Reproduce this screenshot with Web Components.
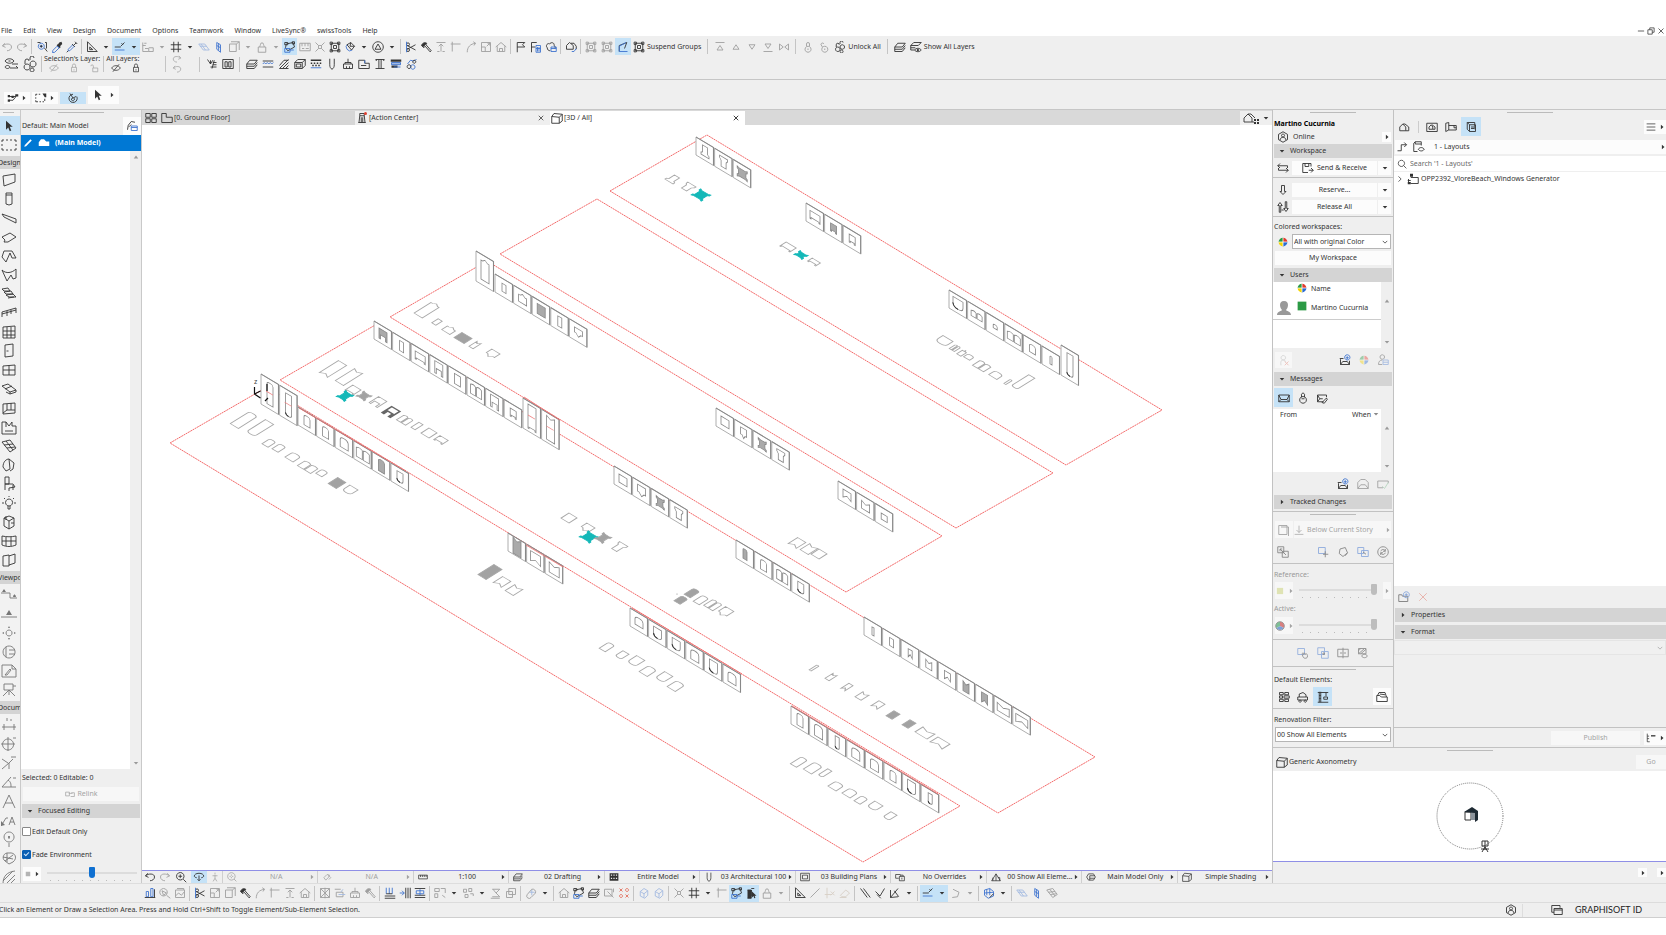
<!DOCTYPE html>
<html lang="en">
<head>
<meta charset="utf-8">
<title>3D / All</title>
<style>
html,body{margin:0;height:100%}
body{font:7px/10px "Noto Sans","Open Sans",sans-serif;color:#333;background:#fff}
</style>
</head>
<body>
<cad-app></cad-app>
<script>
/* Icons on a 16 unit grid. Parts are split by "|": a part that starts with "!" is filled, "b" is drawn in the accent colour. */
const ICONS={
undo:'M5 3 2 6.500l4 2M2 6.500C6 3 14 3 14 8c0 3-3 5-6 5',
redo:'M11 3l3 3.500-4 2M14 6.500C10 3 2 3 2 8c0 3 3 5 6 5',
find:'M11 9l4 5M2 2h4M12 2h2v8|bM7 3a4 4 0 1 0 .1 0M5 7h4M7 5v4|!M5.500 7a1.500 1.500 0 1 0 3 0 1.500 1.500 0 1 0-3 0',
pip:'!M9 5l2-3 3-1 1 3-3 3 1 1-1.500 1.500L7.500 5.500 9 4z|bM8 7l3 2-6 6-3 .500.500-3z',
syr:'M12 1l3 3M13.500 2.500l-3 3M8 4l4 4|bM9 5L3 11v2h2l6-6|M3 13l-2 2',
tri:'M2 1v13h13zM5 8v3.500h4z',
guide:'M9 7l5-5M10 3l2 2M1 8h8|bM1 12h13',
xy:'M1 2v12h8V10H4M1 6h4M9 9h6v5H9M3 3h3',
grid:'M5 1v14M11 1v14M1 5h14M1 11h14',
plane:'bM1 4h8l6 8H7zM4 4l6 8M2.500 7h9',
wall:'bM5 2l5 3v10l-5-4zM7.500 3.500v9M5 6l5 3',
sheet:'M4 1h11v11M2 4h9v10H2zM11 4l4-3',
bag:'M3 15V8h10v7zM5 8c0-2 1-2 1-3.500a2 2 0 1 1 4 0C10 6 11 6 11 8',
snap:'M3 4l9-2 2 6-9 5-3-4zM1 2h4v3H1zM11 1h3v3h-3z|bM1 10h7v5H1zM8 12h5',
rul:'M1 3h14v10H1zM4 3v4M8 3v4M12 3v4M4 10h3M9 10h4',
burst:'M2 2l4 4M14 2l-4 4M2 14l4-4M14 14l-4-4M6 6h4v4H6z',
grp:'M3 3h10v10H3zM1.500 1.500h3v3h-3zM11.500 1.500h3v3h-3zM1.500 11.500h3v3h-3zM11.500 11.500h3v3h-3zM6 6h4v4H6z',
roll:'bM5 4a4.500 4.500 0 1 0 6 8|M4 5l5-3 5 5-4 5zM9 2l-1 5 6 0',
delta:'M8 1a7 7 0 1 0 .1 0M8 4l4 7H4z',
cut:'M3 6l11 6M14 5L3 11M2 4.500a2 2 0 1 0 4 0 2 2 0 1 0-4 0M2 12a2 2 0 1 0 4 0 2 2 0 1 0-4 0|bM2 1v14',
hammer:'M2 6c1-3 4-5 7-3l-1 2 7 8-1.500 1.500L7 7 5 9z|!M2 6c1-3 4-5 7-3L5 8z',
up:'M2 2h12M8 14V4M5 7l3-3 3 3M3 14h3M10 14h3',
corner:'M3 14V4h11M1 4h2M3 1v3',
arc:'M3 15C3 8 7 4 14 3M11 1l3 2-2 3',
boxr:'M2 2h12v12H2zM2 8h5v6M9 7l4-4M10 3h3v3',
house:'M1 8l7-6 7 6M3 7v7h10V7M6 14v-4h4v4',
flag:'M3 15V2h10l-3 3 3 3H3',
flagb:'M2 15V2h7M2 8h5|bM8 6h6v9H8zM10 8v6M12 8v6M8 10h6',
cloud:'M3 9C0 6 4 2 6 4c2-3 7-2 6 2 2 1 2 3 1 4M3 9c0 3 2 4 4 4|bM8 8h7v6H8zM8 10h7',
houses:'M2 11V6l4-4 5 4v5zM8 3h4l3 4v4|bM9 14h3l3-4',
poly:'M3 14V6l10-4-3 8|bM3 14h11M3 14V7l9-5',
top:'M2 2h12M8 6l4 6H4z',
tup:'M8 5l4 6H4z',
tdn:'M8 11l4-6H4z',
bot:'M2 14h12M8 10l4-6H4z',
mir:'M2 4l5 4-5 4zM14 4l-5 4 5 4z',
lock:'M8 7a4 4 0 1 0 .1 0M6 7V4a2 2 0 0 1 4 0v3M8 10v2',
unl:'M9 7a4 4 0 1 0 .1 0M6 8L4 5a2 2 0 0 1 3-2l1 1M9 10v2',
unls:'M5 8a3 3 0 1 0 .1 0M3 8V5a2 2 0 0 1 4 0M11 5a3 3 0 1 0 .1 0M8 4V2a2 2 0 0 1 4 0M10 12a2 2 0 1 0 .1 0',
layers:'M1 8l4-5h10l-4 5zM1 11l10 0 4-5M1 14h10l4-5M1 8v6',
layeye:'M1 6l4-4h10l-4 4zM1 9h6M1 12h5M1 6v6M6 12c2-3 7-3 9 0-2 3-7 3-9 0|!M9 12a1.500 1.500 0 1 0 3 0 1.500 1.500 0 1 0-3 0',
eyeswap:'M1 5c2-3 7-3 9 0-2 3-7 3-9 0M4.500 5h2M6 12h8l-2-2M14 8H8M1 11c1-2 4-2 5 0-1 2-4 2-5 0',
eyeoff:'M1 8c3-5 11-5 14 0-3 5-11 5-14 0M3 14L13 2',
lk:'M4 7h8v7H4zM5.500 7V4a2.500 2.500 0 0 1 5 0v3M8 10v2',
ulk:'M6 8h8v6H6zM7 8V5a2 2 0 0 0-4 0',
wl:'M2 2l4 6V3M6 8l3-5M9 6h5M9 9h5M6 12h8M11 3l-3 11',
pan:'M1 2h14v12H1zM4 5h3v7H4zM9 5h3v7H9z',
wave:'M1 4h14M1 12h14|bM1 8l2-2 2 2 2-2 2 2 2-2 2 2 2-2',
hatch:'M2 14L14 2M6 14l8-8M10 14l4-4M2 14h12M2 10l6-7h6',
blocks:'M1 6l4-4h10v8l-4 4H1zM1 6h10l4-4M11 6v8M3 8h6v4H3z',
fill:'!M1 2h14v2H1zM1 6h2v2H1zM5 6h2v2H5zM9 6h2v2H9zM13 6h2v2h-2zM3 9h2v2H3zM7 9h2v2H7zM11 9h2v2h-2z|bM1 13h14',
pen:'M5 1v8c0 3 1 5 3 6 2-1 3-3 3-6V1',
brush:'M2 14V8h12v6zM4 8V6h8v2M8 6V1M6 11v3M10 11v3',
zone:'M1 3h8v4h6v7H1zM4 10h7|bM9 3v4',
ibeam:'M2 2h12M2 14h12M6.500 2v12M9.500 2v12M3 2v2M13 2v2',
bluef:'!M1 2h14v3H1zM2 10h8v3H2z|bM2 6h12v3H2zM2 8h12M5 12h9',
cir:'bM2 8l4-5 4 1M10 4l4-2M9 9a3 3 0 1 0 .1 0|M4 9a2.500 2.500 0 1 0 .1 0M11 3a2 2 0 1 0 .1 0',
cursor:'!M4 1v12l3-3 2 5 2-1-2-5h4z',
marq:'M1 3h2M5 3h2M9 3h2M13 3h2v2M15 7v2M15 11v2h-2M11 13H9M7 13H5M3 13H1v-2M1 9V7M1 5V3',
marqp:'M1 3h2M5 3h2M8 13H6M4 13H1v-2M1 9V7M1 5V3M12 13h-2M13 12V9|!M10 2h5v5h-2z',
selx:'M3 6h9l-4 5H2|!M1 4h3v3H1zM1 10h3v3H1zM6 5h3v3H6zM11 3h4v3h-4z',
rot:'M8 3a5.500 5.500 0 1 0 5 3M8 8L4 2M6 9l6-3M6 9a2 2 0 1 0 3-1',
tab4:'M1 2h6v5H1zM9 2h6v5H9zM1 9h6v5H1zM9 9h6v5H9z',
folder:'M1 14V2h6v5h8v7z',
tower:'M4 14l1-9h6l1 9M3 14h10M5 5V2h6v3M7 7v7M9 7v7',
cube:'M1 6l3-4 11 1v9l-4 3H1zM1 6l10 1M11 7l4-4M11 7v8',
hcam:'M1 12V8l4-4 4 4v4zM5 4h3l4 4|M9 12h2|!M11 9h2v2h-2zM14 9h2v2h-2zM11 12h2v2h-2zM14 12h2v2h-2z',
quad:'M2 4l12-2v8L3 14z',
col:'M5 2h6v11l-3 1-3-1zM5 4h6',
beam:'M1 4l14 5v4L3 7z',
slab:'M1 8l8-4 6 4-8 5H3l1-2z',
roof:'M3 3h8l4 7h-4l-2-5-4 9-4-5z',
shell:'M1 3c4 4 10 3 14-1v9l-3 1-2-4-4 6z',
stair:'M1 3l6-1 2 3H3zM3 6l7-1 2 3H5zM5 9l7-1 3 3H8zM7 12l6-1',
rail:'M1 7l14-4M1 7v5M15 3v5M6 6v5M10 5v4M1 9l14-4',
cw:'M2 3l12-1v12l-12 0zM2 7h12M2 11h12M6 3v11M10 3v11',
door:'M4 2l8-1v12l-8 1zM5.500 8h2',
win:'M2 4l12-1v10l-12 0zM2 8h12M8 3.500V13',
sky:'M1 5l6-2 8 6-6 2zM4 8l7-3M9 11v2l6-2V9M5 11l4 2',
opn:'M2 4l12-1v10l-12 1zM6 4v6l-4 3M6 10h8M10 3v7',
znt:'M1 3h4l3 4 3-4v4h4v8H1zM5 3v5M4 12h8',
mesh:'M1 4l8-2 6 8-6 4zM3 7l9-1M6 10l8-1M5 3l7 9',
obj:'M2 10C2 5 5 2 8 2l1 10-4 2zM8 2l5 4-1 6-3 2',
chair:'M4 1h4v7H4zM4 8v6M4 8h8l2 3-6 1M12 9v5M8 12v3',
lamp:'M8 4a3.500 3.500 0 1 0 .1 0M7 11v3h2v-3M1 8h2M13 8h2M8 1v1M3 3l1 1M13 3l-1 1',
ccube:'M3 4l5-2 5 2v8l-5 3-5-3zM3 4l5 3 5-3M8 7v8M5 2v4M10 9h3',
gridw:'M1 3c5 1 9 1 14 0v9c-5 2-9 2-14 0zM1 8h14M5 4v9M10 4v9',
mpan:'M2 4l6-1v11l-6 0zM8 4l6-2v9l-6 2',
sec:'M0 6h9v5h7M2 4h2M12 9h3|!M1 5l2-3 2 3zM12 10l1.500-3 1.500 3z',
elev:'M0 11h16|!M5 9l3-5 3 5z',
intel:'M8 5a3 3 0 1 0 .1 0|!M7 3l1-2 1 2zM7 13l1 2 1-2zM3 7L1 8l2 1zM13 7l2 1-2 1z',
det:'M8 2a6 6 0 1 0 .1 0M5 3v10M8 6h6M8 10h6',
wks:'M1 2h10l4 4v8H1zM4 12l5-6 1 1-4 5zM11 2v4h4',
cam:'M3 2h9v6H3zM12 4h3M8 8l-6 6M8 8l6 6M8 8v5',
dim:'M1 10h14M3 7v6M13 7v6M6 4V1M10 4V2',
lev:'M7 3a5.500 5.500 0 1 0 .1 0M0 8h14M7 1v14M12 2h3',
rad:'M8 8l-7 6M1 4l6 4M8 8v6M10 2h5M8 8l4-4',
ang:'M15 13H1L10 3M7 6c3 2 3 4 3 7M12 4h3',
A:'M2 15L8 2l6 13M4 10h8',
A1:'M0 14l5-8h2M8 13l3-8 3 8M9 10h4|!M0 14V9l4 4z',
pin:'M8 1a5 5 0 1 0 .1 0M8 5v3M8 12v4|!M7 6a1 1 0 1 0 2 0 1 1 0 1 0-2 0',
ball:'M4 11C0 8 3 2 8 3c6-1 9 5 4 9l-4 2zM4 11l8-6M2 7l10 2M6 3v9',
fil:'M2 15C2 7 6 3 14 2M5 15l9-9M2 12L12 2M9 15l5-5',
pencil:'!M2 14l1-3 9-9 2 2-9 9z',
houseF:'!M1 12V7l3-4h4l3 3h4v6H1z',
foldb:'M2 13l1-6 4-5 5 1M4 9l3-3|bM7 8h8v6H7zM7 10h8',
link:'M1 5h6v6H1zM6 7h6M10 6h5v6h-6',
zoom:'M7 2a5 5 0 1 0 .1 0M11 11l4 4M4.500 7h5M7 4.500v5',
zfit:'M7 1a6 6 0 1 0 .1 0M11 11l4 4M7 4v2M7 8v2M4 7h2M8 7h2',
orb:'M5 9C-1 8 2 3 8 3s9 3 5 3 6M8 6v7M6 11l2 2 2-2',
walk:'M8 1v3M4 6h8M8 5v5l-3 5M8 10l3 5',
hand:'M3 9l5-5 4 1-2 4-4 4zM10 5l4 4-3 3',
scale:'M1 5h14v6H1zM4 5v3M7 5v3M10 5v3M13 5v3',
dots:'!M1 2h14v12H1zM3 4v2h2V4zM7 4v2h2V4zM11 4v2h2V4zM3 9v2h2V9zM7 9v2h2V9zM11 9v2h2V9z',
frame:'M1 2h14v12H1zM4 5h8v6H4z',
ovr:'M1 4h8M1 4v6h5M7 7h8v7H7zM9 7V5h4v2M11 9v3',
reno:'M1 14h14L8 3zM8 3v11M3 14V9M11 9h3v5',
mdl:'M1 8l3-5h8l3 5-3 5H4zM6 6h8M6 10h8M6 6v7',
bars:'bM3 6h3v7H3zM9 2h3v11H9z|M1 14h14M14 3v11',
ztri:'M6 2a5 5 0 1 0 .1 0M10 11l5 4M4 5l6 3-4 3z',
img:'M2 4h12v10H2zM2 12l4-4 4 3 4-5M4 2h9v2',
xbox:'M2 2h12v12H2zM2 2l12 12M14 2L2 14M8 1v14',
rep:'M3 13V7h9v6zM1 3h8|bM6 10h9M12 3l-3 4',
comb:'bM3 1v8M7 1v8M11 1v8|M1 12h14M1 15h14M3 9h8',
comb2:'bM1 8h6M4 5l3 3-3 3|M9 1v14M12 1v14M15 1v14',
comb3:'M1 2h14M1 14h14M1 11h14|bM3 5h10v4H3zM8 3v8',
al:'M1 2h6v4H1zM1 9h4v5H1zM9 2h6v6M11 11l4 3',
ds:'M2 3h4v4H2zM9 2h4v4H9zM4 10h4v4H4zM11 9h4v3',
stk:'M3 3h10l-5 5 5 5H3M1 15h12M4 3l4 5',
cp:'M5 2h9v8H5zM2 6h8v8H2z',
plus:'M3 10L9 3a4 4 0 0 1 5 5l-6 6a3 3 0 0 1-5-4|bM9 4v7M6 7h7',
fx:'M2 3h10v9H2zM6 6l8 8M14 2v5',
rx:'rM2 2l4 4M6 2L2 6M10 10l4 4M14 10l-4 4M12 2a2 2 0 1 0 .1 0M4 10a2 2 0 1 0 .1 0',
b3:'bM3 6l5-4 5 3v6l-4 4-6-3zM3 6l5 3 5-4M8 9v5',
cur2:'M2 4h5v11H2M7 2h4M7 4v8|!M2 4h5v11H2zM8 6v8l2-2 1 3 1.500-.500-1-3H14z',
ln:'M2 14L14 2',
axx:'oM4 1v14M1 10h10M9 6l5 5M14 6l-5 5',
ers:'oM2 11l7-7 5 4-5 5H4zM1 14h9',
par:'M2 2l9 12M6 2l9 12',
perp:'M2 6l6 6M8 12l6-10M4 10l5 5',
angl:'M2 14L12 2M2 14l10-1M2 14V4M7 5l6 8',
br:'M4 3l8 4-2 6-7 1',
cubes:'bM2 4l7-2 5 4v6l-7 3-5-4zM5 3v8M9 2v9M2 8l12-1|M9 14l5-5',
pers:'M8 1l6 3.500v7L8 15l-6-3.500v-7zM8 4a2 2 0 1 0 .1 0M4 12c1-5 7-5 8 0',
wins:'M1 2h11v3M1 2v9h3M4 6h11v8H4zM4 8h11',
swap:'M4 2L1 5l3 3M1 5h13v3M12 8l3 3-3 3M15 11H2V8',
disk:'M1 2h11v4M1 2v12h7M4 2v4h5V2M9 11h6M12 8l3 3-3 3',
dn:'M6 2h4v8h2l-4 4-4-4h2z',
upd:'M3 15V6H1l3-4 3 4H5v9zM11 1h2v9h2l-3 4-3-4h2zM6 12h3',
usrx:'M7 2a3 3 0 1 0 .1 0M4 15c-1-6 1-7 3-7s3 1 3 3|rM9 10l5 5M14 10l-5 5',
usrb:'M7 1a3 3 0 1 0 .1 0M2 14c0-4 2-6 5-6M2 14h5|bM8 8h7v6H8zM8 11h7',
mailb:'M2 7v7h12V9M2 14l3-4h6l3 4M1 6h5|bM11 1a3.500 3.500 0 1 0 .1 0M11 3v4M9 5h4',
mail:'M1 4h14v9H1zM1 4l3 6h8l3-6M4 10l-3 3M12 10l3 3',
bell:'M8 6a4.500 4.500 0 1 0 .1 0M6 7V3l2-2 2 2v4M6 9h4',
mailp:'M10 13H2V4h12v3M2 4l3 5h4M2 13l3-4M8 14l6-6 1 2-4 5z',
mailo:'M1 14V6l4-4h6l4 4v8zM1 14l4-5h6l4 5',
mailg:'M8 13H1V4h14v3|gM7 11l3 3 5-8',
story:'M1 2h11v12H1zM4 4h10v12',
down:'M8 1v11M4 8l4 4 4-4M1 15h14',
trk:'M1 1h8v8H1zM7 7h8v8H7zM4 4l8 8M4 4v3M4 4h3',
sqp:'bM2 2h9v8H2z|M11 7v8M8 11h7',
sqr:'M4 4l7-2 3 7-6 5-5-4zM11 13l3-4',
sqs:'bM1 2h8v8H1zM6 6h9v8H6z|M8 8l4 3',
ref:'M8 1a7 7 0 1 0 .1 0M5 7c1-3 5-3 6 0M11 9c-1 3-5 3-6 0M11 4v3H8M5 12V9h3',
sqh:'bM1 2h9v8H1z|M7 10c0-3 2-3 2 0 1-3 2-2 2 0 2-2 3 0 3 2s-1 3-3 3-3-1-4-5',
sqo:'bM1 1h9v9H1zM6 6h9v9H6z|M8 8h2v2H8z',
sqm:'M1 3h14v10H1zM8 1v14M4 8h3M9 8h3',
sqx:'M2 2h10v7H2zM2 9l8-7M2 5l3-3M5 9l7-6M6 12c2-3 6-3 8 0-2 3-6 3-8 0',
brick:'M2 2h5v3H2zM9 2h5v3H9zM2 6.500h4v3H2zM8 6.500h7v3H8zM2 11h5v3H2zM9 11h5v3H9z',
doz:'M1 8h13v4H1zM3 8V4l5-2 4 3v3M4 12a1.500 1.500 0 1 0 .1 0M11 12a1.500 1.500 0 1 0 .1 0',
crane:'M3 1v14M5 1v14M1 2h14M12 2v5M3 6h2M3 10h2M1 15h14M9 8h5v3H9z',
fold2:'M1 14V6h4l2 2h8v6zM2 6l2-4 8 0 2 6M5 4l7 1',
hs:'M1 13V8l4-4 4 4v5zM5 4h3l5 4v5H9',
hsf:'M1 3h14v11H1zM4 11V8l3-3 2 3v3zM8 5l4 3v3H9',
bk:'M1 14V3l4-1v10l-4 2M5 6h10v6H5M12 6v3h3',
book:'M3 2h10v9M3 2v9l3 3h8V5H6M3 2l3 3v9M8 8h4M8 10h4',
menu:'M1 3h14M1 8h14M1 13h14',
back:'M2 13h5V5h7M11 2l3 3-3 3',
lay:'M3 1h8v5M3 1L1 3v11h5M3 1v3h8M7 11c2-3 6-3 8 0-2 3-6 3-8 0',
mag:'M7 2a5 5 0 1 0 .1 0M11 11l4 4',
chev:'M4 1l7 7-7 7',
chd:'M2 5l6 6 6-6',
proj:'M5 6h10v8H5M2 14V8M1 10h4|!M4 1h4v4H4zM1 12h4v3H1z',
newf:'M1 14V5h4l1 2h7v7z|bM11 1a4 4 0 1 0 .1 0M11 3v4M9 5h4',
x:'M2 2l12 12M14 2L2 14',
xr:'rM2 2l12 12M14 2L2 14',
tree:'M2 1v13h4M2 5h3M2 9h3M8 5h7|M8 4h7',
rt:'!M5 2l7 6-7 6z',
dd:'!M2 5h12l-6 7z',
uu:'!M2 12h12L8 4z',
min:'M3 8h10',
res:'M3 6h7v7H3zM6 6V3h7v7h-3',
cls:'M4 4l8 8M12 4l-8 8',
};
ICONS.orb='M5 9C-1 8 2 3 8 3s9 5 3 6M8 6v7M6 11l2 2 2-2';
const EXTRA={
pie:'<path fill="#e23b2e" d="M8 8V1a7 7 0 0 1 7 7z"/><path fill="#2a6bd0" d="M8 8h7a7 7 0 0 1-7 7z"/><path fill="#f4d300" d="M8 8v7a7 7 0 0 1-7-7z"/><path fill="#2b9a45" d="M8 8H1a7 7 0 0 1 7-7z"/><path stroke="#fff" d="M8 1v14M1 8h14"/>',
person:'<path fill="#999" d="M8 1c3 0 4 2 4 4s-1 4-2 5c0 1 5 1 5 5H1c0-4 5-4 5-5-1-1-2-3-2-5s1-4 4-4z"/>',
green:'<path fill="#2b9a45" d="M1 1h14v14H1z"/>',
sqy:'<path fill="#dfe3b4" d="M3 3h10v10H3z"/>',
sqg:'<path fill="#b4b4b4" d="M2 2h12v12H2z"/>',
rgb:'<path fill="#d98080" d="M8 8V1a7 7 0 0 1 6 10z"/><path fill="#7ea2d8" d="M8 8l6 3a7 7 0 0 1-12 0z"/><path fill="#7fbf95" d="M8 8l-6 3A7 7 0 0 1 8 1z"/><circle cx="8" cy="8" r="7" stroke="#888"/>',
};
const ico=n=>EXTRA[n]||(ICONS[n]||'').split('|').map(p=>{
  const k=p[0],c={b:'var(--accent,#3f74cf)',r:'#e2705f',g:'#68b37e',o:'#b9a58f'}[k];
  return k==='!'?`<path fill="currentColor" d="${p.slice(1)}"/>`:`<path stroke="${c||'currentColor'}" d="${c?p.slice(1):p}"/>`}).join('');

const define=(name,css,html)=>customElements.define(name,class extends HTMLElement{
  connectedCallback(){
    if(this.shadowRoot)return;
    const r=this.attachShadow({mode:'open'}),t=document.createElement('template');
    t.innerHTML=`<style>*{box-sizing:border-box}${css}</style>${typeof html==='function'?html(this):html}`;
    r.append(t.content.cloneNode(true));
  }});

define('ui-icon',':host{display:inline-flex;flex:none;width:12px;height:12px}:host([s]){width:10px;height:10px}:host([xs]){width:6px;height:6px}:host([l]){width:16px;height:16px}:host([dim]){opacity:.4}svg{width:100%;height:100%;fill:none;stroke-width:1.2}:host([l]) svg{stroke-width:.9}:host([xs]) svg{stroke-width:2}',
  e=>`<svg viewBox="0 0 16 16" aria-hidden="true">${ico(e.getAttribute('n'))}</svg>`);

/* A row of tools. name, name- (disabled), name* (active), v (menu arrow), "|" (rule), =Label */
define('tool-row',':host{display:flex;align-items:center;height:17px;--w:15px}button{all:unset;box-sizing:border-box;flex:none;width:var(--w);height:17px;display:flex;align-items:center;justify-content:center}.d{width:13px}.on{background:#c5e2f7}.off{opacity:.42}i{flex:none;width:1px;height:15px;background:#c4c4c4;margin:0 2px}.t{width:auto;white-space:nowrap;padding-right:3px}.wide{--w:16px;display:flex;align-items:center}.wide i{margin:0 4px 0 3px}',
  e=>{const one=t=>{
    if(t==='|')return'<i></i>';
    if(t[0]==='=')return`<button class="t">${t.slice(1).replace(/_/g,' ')}</button>`;
    const f=t.slice(-1),n=t.replace(/[-*]$/,''),c=(n==='v'?'d ':'')+(f==='*'?'on':f==='-'?'off':'');
    return`<button class="${c}" aria-label="${n==='v'?'more':n}"><ui-icon ${n==='v'?'xs n="dd"':`n="${n}"`}></ui-icon></button>`};
    const [a,b]=e.getAttribute('tools').split('//');
    const m=s=>s.split(/\s+/).filter(Boolean).map(one).join('');
    return m(a)+(b?`<span class="wide">${m(b)}</span>`:'')});

define('menu-bar',':host{display:flex;height:36px;align-items:flex-end;justify-content:space-between;background:#fff;padding:0 0 0 1px}nav{display:flex;gap:11px}a{color:inherit;text-decoration:none;line-height:11px}div{display:flex}',
  `<nav>${['File','Edit','View','Design','Document','Options','Teamwork','Window','LiveSync®','swissTools','Help'].map(t=>`<a href="#">${t}</a>`).join('')}</nav><div><ui-icon s n="min"></ui-icon><ui-icon s n="res"></ui-icon><ui-icon s n="cls"></ui-icon></div>`);

define('layer-row',':host{display:flex;height:24px;align-items:center;padding:0 0 7px 4px}i{width:1px;align-self:stretch;background:#c4c4c4;margin:1px 2px 0 3px}.g{display:flex;flex-direction:column;white-space:nowrap;line-height:9px}.g span{display:flex;gap:10px;padding-left:5px}.u{display:flex;flex-direction:column;margin:0 14px 0 4px}tool-row{--w:16px;margin-bottom:-1px}',
  `<ui-icon n="eyeswap" l></ui-icon><ui-icon n="unls" l style="margin-left:2px"></ui-icon><i></i>
  <div class="g"><span style="padding:0">Selection's Layer:</span><span><ui-icon s dim n="eyeoff"></ui-icon><ui-icon s dim n="lk"></ui-icon><ui-icon s dim n="ulk"></ui-icon></span></div><i></i>
  <div class="g"><span style="padding:0">All Layers:</span><span><ui-icon s n="eyeoff"></ui-icon><ui-icon s n="lk"></ui-icon></span></div>
  <i style="margin-left:24px"></i><div class="u"><ui-icon s dim n="redo"></ui-icon><ui-icon s dim n="undo"></ui-icon></div>
  <tool-row tools="// | wl pan | layers wave hatch blocks fill pen brush zone ibeam bluef cir"></tool-row>`);

define('info-bar',':host{display:flex;height:31px;align-items:center;gap:2px;padding:6px 0 0 4px;border-top:1px solid #c6c6c6;border-bottom:1px solid #c6c6c6}button{all:unset;box-sizing:border-box;background:#fcfcfc;height:12px;width:26px;display:flex;align-items:center;justify-content:space-evenly}.on{background:#c5e2f7}.b{height:18px;width:31px;margin-bottom:6px}',
  `<button aria-label="Selection"><ui-icon n="selx"></ui-icon><ui-icon xs n="rt"></ui-icon></button><button aria-label="Marquee"><ui-icon n="marqp"></ui-icon><ui-icon xs n="rt"></ui-icon></button><button class="on" aria-label="Rotate"><ui-icon n="rot"></ui-icon></button><button class="b" aria-label="Arrow"><ui-icon n="cursor"></ui-icon><ui-icon xs n="rt"></ui-icon></button>`);

define('tool-box',':host{display:flex;flex-direction:column;width:21px;overflow:hidden;border-right:1px solid #c9c9c9;background:#f2f2f2}button{all:unset;height:19px;flex:none;display:flex;justify-content:center;align-items:center;padding-right:3px}.on{background:#c5e2f7}.lt{color:#777}hr{width:11px;margin:2px 0 3px 3px;border:0;border-top:1px solid #bbb;flex:none}h3{font:inherit;line-height:13px;margin:2px 0 1px;background:#d4d4d4;text-indent:-2px;white-space:nowrap;overflow:hidden;flex:none;width:20px}',
  ()=>{const b=(s,c='')=>s.split(' ').map(n=>`<button class="${c}" aria-label="${n}"><ui-icon l n="${n}"></ui-icon></button>`).join('');
  return `<hr><button class="on" aria-label="Arrow"><ui-icon n="cursor"></ui-icon></button>${b('marq')}<h3>Design</h3>${b('quad col beam slab roof shell stair rail cw door win sky opn znt mesh obj chair lamp ccube gridw mpan')}<h3>Viewpoint</h3>${b('sec elev intel det wks cam','lt')}<h3>Document</h3>${b('dim lev rad ang A A1 pin ball fil','lt')}`});

const HEAD='h3{margin:0 1px;font:inherit;background:#d4d4d4;height:14px;display:flex;align-items:center;gap:5px;padding:0 5px}hr.g{width:46px;margin:2px auto 0;border:0;border-top:1px solid #bbb}hr.l{margin:0;border:0;border-top:1px solid #c2c2c2}.r{display:flex;align-items:center}';
const RANGE='input[type=range]{appearance:none;-webkit-appearance:none;background:none;margin:0;height:12px;width:100%;flex:none;min-width:0}input[type=range]::-webkit-slider-runnable-track{height:2px;background:#dcdcdc}input[type=range]::-webkit-slider-thumb{-webkit-appearance:none;width:6px;height:11px;margin-top:-5px;background:var(--thumb,#bdbdbd);border-radius:1px 1px 3px 3px}.sl{flex:1;min-width:0;display:flex;flex-direction:column}.sl::after{content:"";height:1px;margin:1px 3px 0;background:repeating-linear-gradient(90deg,#bbb 0 1px,transparent 1px 8px)}';
const BTN='button{all:unset;box-sizing:border-box;background:#fcfcfc;height:14px;display:flex;align-items:center;justify-content:center;gap:3px;white-space:nowrap}button:disabled{color:#a4a4a4;background:#f7f7f7}';

define('model-panel',`:host{display:flex;flex-direction:column;width:121px;border-right:1px solid #c9c9c9;background:#efefef}${HEAD}${RANGE}${BTN}.top{height:22px;justify-content:space-between;padding:3px 0 0 1px}.top button{width:18px;height:18px}.sel{background:#0078d4;color:#fff;font-weight:700;height:16px;gap:5px;padding-left:2px}.list{flex:1;display:flex;min-height:60px}.list div{flex:1;background:#fff}.list aside{width:11px;display:flex;flex-direction:column;justify-content:space-between;align-items:center;padding:3px 0;color:#999}label.r{gap:1px;height:23px;padding-left:1px}input[type=checkbox]{appearance:none;margin:0;width:9px;height:9px;border:1px solid #888;border-radius:1px;background:#fff}input:checked{border-color:#0a5fb4;background:#0a5fb4}.ck{position:relative;display:flex}.ck::after{content:"";position:absolute;left:2px;top:2px;width:4px;height:2px;border:solid #cfe4f8;border-width:0 0 1px 1px;rotate:-45deg}`,
  `<hr class="g"><div class="r top"><span>Default: Main Model</span><button aria-label="Settings"><ui-icon n="foldb"></ui-icon></button></div>
  <div class="r sel"><ui-icon s n="pencil"></ui-icon><ui-icon n="houseF"></ui-icon><span>(Main Model)</span></div>
  <div class="list"><div></div><aside><ui-icon xs n="uu"></ui-icon><ui-icon xs n="dd"></ui-icon></aside></div>
  <div class="r" style="height:18px;padding-left:1px">Selected: 0 Editable: 0</div>
  <button disabled style="margin:0 2px 3px"><ui-icon s n="link"></ui-icon>Relink</button>
  <h3><ui-icon xs n="dd"></ui-icon>Focused Editing</h3><div style="height:2px"></div>
  <label class="r"><input type="checkbox">Edit Default Only</label><label class="r"><span class="ck"><input type="checkbox" checked></span>Fade Environment</label>
  <div class="r" style="height:17px;padding:0 4px 2px 2px;gap:6px;--thumb:#0f70d1"><button style="width:18px" aria-label="Colour"><ui-icon xs n="sqg"></ui-icon><ui-icon xs n="rt"></ui-icon></button><span class="sl"><input type="range" value="50" aria-label="Fade"></span></div>`);

define('view-tabs',':host{display:flex;height:15px;padding-top:1px;background:#d9d9d9}button{all:unset;box-sizing:border-box;width:195px;display:flex;align-items:center;gap:1px;padding:0 6px 0 1px;background:#efefef}button:first-of-type{background:#d6d6d6}.on{background:#fff}.x{margin-left:auto}.e{background:#efefef;width:32px;display:flex;align-items:center;justify-content:space-evenly;margin-left:auto}.g{width:18px;display:flex;align-items:center;justify-content:center}.d{position:relative}.d::after{content:"";position:absolute;right:1px;top:0;width:3px;height:3px;background:#e04030;border-radius:2px}',
  `<span class="g"><ui-icon n="tab4"></ui-icon></span><button><ui-icon n="folder"></ui-icon>[0. Ground Floor]</button><button><ui-icon class="d" n="tower"></ui-icon><span>[Action Center]</span><ui-icon class="x" xs n="x"></ui-icon></button><button class="on"><ui-icon n="cube"></ui-icon><span>[3D / All]</span><ui-icon class="x" xs n="x" style="color:#000"></ui-icon></button><span class="e"><ui-icon l n="hcam"></ui-icon><ui-icon xs n="dd"></ui-icon></span>`);

/* Axonometric model: wall panels with an opening each, and the openings laid flat on the site. */
const SHAPES={
 r:(w,h)=>`M${-w} ${-h}H${w}V${h}H${-w}Z`,
 a:(w,h)=>`M${-w} ${h}V${-h+w*.7}Q${-w} ${-h} 0 ${-h}T${w} ${-h+w*.7}V${h}Z`,
 u:(w,h)=>`M${-w} ${-h}H${w}V${h-w*.8}Q${w} ${h} 0 ${h}T${-w} ${h-w*.8}Z`,
 g:(w,h)=>`M${-w} ${h}V${-h+1}H${-w+1.5}L0 ${-h-1}L${w-1.5} ${-h+1}H${w}V${h}Z`,
 p:(w,h)=>`M${-w} ${-h}H${w}V${h-3}H${w-1.5}L0 ${h}L${-w+1.5} ${h-3}H${-w}Z`,
 v:(w,h)=>`M${-w} ${-h}L0 ${-h+2.5}L${w} ${-h}V${h}H${-w}Z`,
 w:(w,h)=>`M${-w} ${-h}H${w}V${h}L0 ${h-3}L${-w} ${h}Z`,
 t:(w,h)=>`M${-w+1.5} ${-h}H${w-1.5}V${h-3}L${w} ${h-2}V${h}H${-w}V${h-2}L${-w+1.5} ${h-3}Z`,
 i:(w,h)=>`M${-w} ${-h}H${w}V${-h+2}L${w-1.5} ${-h+4}V${h}H${-w+1.5}V${-h+4}L${-w} ${-h+2}Z`,
 x:(w,h)=>`M${-w} ${-h}L${-w+2} ${-h+1}H${w-2}L${w} ${-h}V${-h+2}L${w-1.3} ${-h+3}V${h-3}L${w} ${h-2}V${h}L${w-2} ${h-1}H${-w+2}L${-w} ${h}V${h-2}L${-w+1.3} ${h-3}V${-h+3}L${-w} ${-h+2}Z`,
 l:(w,h)=>`M${-w} ${-h}H${w}V${h}H${w-1}V${h-1.5}H${-w+1}V${h}H${-w}Z`,
 m:(w,h)=>`M${-w} ${-h}H${w}V${h}H${w-1.5}V1H${-w+1.5}V${h}H${-w}Z`,
 d:(w,h)=>`M${-w-.5} ${h}V${-h+1}Q${-w/2} ${-h-1} -.5 ${-h+1}V${h}ZM.5 ${h}V${-h+1}Q${w/2} ${-h-1} ${w+.5} ${-h+1}V${h}Z`,
};
const REGIONS=['610 191 707 135 1162 410 1066 465','500 254 597 199 1053 473 956 528','390 317 487 261 942 536 846 592','280 380 377 324 1095 757 998 813','170 443 267 387 960 806 863 862'];
/* x, y, then openings as shape:halfWidth:halfHeight[:f = hatched]; a leading T makes the panel tall */
const ROWS=[
 [696,137,'t:4:5 i:4:5 x:5:5:f'],[806,203,'l:5:4 l:3:4:f l:3:4'],[949,290,'u:5:5 d:5:3 a:2:2 d:6:4 a:3:4 a:1:4'],[1061,345,'Tu:3:11'],
 [476,251,'Tg:4:10'],[495,274,'r:2:4 g:4:4 r:4:5:f r:2:5 p:4:4'],[374,321,'m:4:5:f r:2:5 l:5:4 m:4:6 r:3:5 d:5:5 m:4:6 l:3:4'],[523,398,'Tl:4:12:k Tv:4:12:k'],
 [261,374,'Ta:3:11:k Tu:3:11:k'],[298,407,'a:3:5 a:3:5 a:4:5 d:6:5 a:3:6:f u:3:5'],[716,408,'r:4:4 p:3:5 x:4:5:f i:4:5'],[838,481,'w:4:4 v:4:4 r:3:3'],
 [614,466,'r:4:4 p:4:5 x:4:5:f i:4:5'],[736,540,'a:2:5:f a:3:5 d:5:5 u:3:5'],[508,533,'v:4:8:f w:5:5 v:5:5'],
 [630,608,'a:4:4 u:4:5 u:4:5 a:4:5 u:4:6 a:4:5'],[864,617,'r:1:4 r:2:4 w:2:4 v:3:4 w:3:4 v:3:5:f w:3:5:f v:6:4 w:6:4'],
 [791,706,'a:3:6 a:4:6 u:2:6 a:4:5 a:4:5 a:3:5 u:4:6 u:2:5']];
const FLAT='673,179,t,4,5 688,187,i,4,5 701,195,x,5,6,c 788,247,l,5,4 801,255,x,4,4,c 814,262,l,4,3 944,341,u,5,5 955,348,d,2,4 962,353,g,2,4 969,357,a,3,3 982,366,d,5,5 996,375,a,4,4 1008,382,a,1,4 1023,382,u,3,11 427,310,g,4,11 437,322,r,2,4 449,330,g,4,4 463,338,r,5,5,f 475,345,v,2,5 492,354,p,4,5 333,369,w,4,12 349,377,v,4,12 353,390,l,4,5 345,396,x,4,6,c 364,396,x,4,5,f 378,402,m,4,6 391,412,m,4,6,k 405,420,d,4,5 417,426,r,2,5 429,433,r,4,5 441,440,l,4,4 244,420,a,4,12 260,428,u,4,12 269,443,a,3,5 279,448,a,3,5 293,457,a,4,5 308,467,d,6,5 322,473,a,3,4 337,483,r,4,6,f 350,490,u,4,5 569,518,r,4,5 587,528,p,4,5 589,537,x,5,6,c 603,538,x,4,6,f 619,547,i,4,6 692,593,a,3,6,f 681,600,a,3,5,f 701,600,a,3,6 713,605,d,4,6 725,612,p,4,6 490,572,r,4,10,f 502,582,w,4,6 514,590,v,4,6 607,647,a,3,6 622,655,u,3,5 636,661,u,4,6 648,671,a,4,6 664,677,u,4,6 676,686,a,4,6 797,543,w,4,6 809,549,v,4,6 819,554,r,4,5 814,668,a,1,5 831,677,v,2,5 847,687,w,2,5 862,696,v,3,5 878,705,w,3,5 893,715,r,3,5,f 909,724,r,3,5,f 925,733,v,6,5 940,743,w,6,5 799,762,a,3,7 813,768,a,4,7 825,773,u,2,6 836,786,a,4,5 850,793,a,4,5 861,800,a,3,5 875,806,u,4,5 890,816,u,3,5';
define('model-view',':host{display:block;flex:1;min-height:0;background:#fff;overflow:hidden}svg{width:100%;height:100%;display:block}',()=>{
  let s='';
  for(const [x,y,l] of ROWS)l.split(' ').forEach((o,i)=>{
    const tall=o[0]==='T',[k,ws,hs,f]=o.replace('T','').split(':'),w=+ws,h=+hs,H=tall?30:18,b=H/2+h;
    s+=`<g transform="matrix(1 .6 0 1 ${x+i*18.6} ${y+i*11.2})"><path fill="#fff" stroke="#9a9a9a" stroke-width=".7" d="M0 0H17.500V${H}H0Z"/><path stroke="#888" stroke-width="1.1" d="M0 0H17.500V${H}"/><path transform="translate(9 ${H/2})" stroke="#858585" stroke-width=".8" fill="${f==='f'?'#aaa':'none'}" d="${SHAPES[k](w,h)}"/>${k==='u'?`<path stroke="#333" stroke-width="1.2" d="M${9-w} ${b-w*.8}Q${9-w} ${b} 9 ${b}"/>`:''}${f==='k'?'<path stroke="#f08080" stroke-width=".8" d="M5 14h7"/>':''}</g>`});
  const fl=FLAT.split(' ').map(o=>{const [x,y,k,w,h,c]=o.split(',');
    const col={c:'#14b8b8',f:'#a2a2a2'}[c]||'none';
    return `<path transform="matrix(1 .6 -.8 .5 ${x} ${y})" fill="${col}" stroke="${c==='c'?col:c==='k'?'#666':'#a8a8a8'}" stroke-width="${c==='k'?1.6:.9}" d="${SHAPES[k](+w,+h)}"/>`}).join('');
  return `<svg viewBox="142 125 1130 745" preserveAspectRatio="xMidYMid meet" fill="none" role="img" aria-label="Axonometric model">
  <g stroke="#f25a5a" stroke-width=".9" stroke-dasharray="2 .6">${REGIONS.map(p=>`<polygon points="${p}"/>`).join('')}</g>${fl}${s}
  <path stroke="#f26a6a" stroke-width=".8" d="M299 408L406 471M524 397L560 420M526 545L563 567M632 608L742 674M792 706L938 794"/>
  <path stroke="#111" stroke-width="1.200" d="M254.500 387v7l6 4M254.500 394l6-3M267 384v7M265 401l3-3"/><text x="254" y="384" font-size="7" fill="#444">z</text>
  <circle cx="677" cy="594" r=".6" fill="#888"/></svg>`});

define('quick-bar',':host{display:flex;height:12px;align-items:stretch;background:#efefef}.l{display:flex;width:80px;align-items:center;justify-content:space-around}.on{background:#c5e2f7;width:16px;display:flex;justify-content:center}button{all:unset;flex:1;min-width:0;display:flex;align-items:center;box-sizing:border-box;padding:0 2px 0 4px;border-left:1px solid #cfcfcf;white-space:nowrap}button span{flex:1;text-align:center;padding-left:6px;overflow:hidden}.off{color:#a0a0a0}',
  `<div class="l"><ui-icon n="undo"></ui-icon><ui-icon dim n="redo"></ui-icon><ui-icon n="zoom"></ui-icon><span class="on"><ui-icon n="orb"></ui-icon></span><ui-icon s dim n="walk"></ui-icon></div>`+
  [['zfit','N/A',1],['hand','N/A',1],['scale','1:100'],['layers','02 Drafting'],['dots','Entire Model'],['pen','03 Architectural 100'],['frame','03 Building Plans'],['ovr','No Overrides'],['reno','00 Show All Eleme...'],['mdl','Main Model Only'],['cube','Simple Shading']].map(([n,t,o])=>`<button class="${o?'off':''}"><ui-icon s n="${n}"></ui-icon><span>${t}</span><ui-icon xs n="rt"></ui-icon></button>`).join(''));

const SEL='.s{position:relative;display:flex;flex:1}select{appearance:none;font:inherit;color:inherit;background:#fff;border:1px solid #b5b5b5;height:15px;padding:0 1px;width:100%;border-radius:0}.s ui-icon{position:absolute;right:3px;top:5px}';
define('team-panel',`:host{display:block;width:121px;border-left:1px solid #c2c2c2;background:#efefef}${HEAD}${BTN}${RANGE}${SEL}
 .r{padding:0 2px;gap:1px}.ic{width:16px;display:flex;justify-content:center;flex:none}.sp button:nth-of-type(1){flex:1}.sp button:nth-of-type(2){width:13px}.list{display:flex;margin:0}.list>div{flex:1;background:#fff}.list aside{width:12px;display:flex;flex-direction:column;justify-content:space-between;align-items:center;padding:16px 0 3px;color:#999}table{border-collapse:collapse;width:100%}th,td{font-weight:400;text-align:left;padding:0;vertical-align:middle}.on{background:#c5e2f7}.ics{justify-content:flex-end;gap:8px;padding-right:4px}h4{margin:0;font:inherit;padding-left:1px}.dim{color:#999}.tabs{padding-left:1px}.tabs ui-icon{margin:0 3px}.tabs span{height:19px;width:19px;display:flex;align-items:center;justify-content:center}.tabs span ui-icon{margin:0}.my{width:calc(100% - 4px)}`,
 `<hr class="g"><div class="r" style="height:16px;padding-top:5px;padding-left:1px;color:#000"><b>Martino Cucurnia</b></div>
 <div class="r" style="height:15px"><span class="ic"><ui-icon n="pers"></ui-icon></span><span style="flex:1;padding-left:1px">Online</span><button style="width:9px;height:10px" aria-label="Status"><ui-icon xs n="rt"></ui-icon></button></div>
 <h3><ui-icon xs n="dd"></ui-icon>Workspace</h3>
 <div class="r sp" style="height:19px"><span class="ic"><ui-icon n="swap"></ui-icon></span><button><ui-icon n="disk"></ui-icon>Send &amp; Receive</button><button aria-label="More"><ui-icon xs n="dd"></ui-icon></button></div><hr class="l">
 <div class="r sp" style="height:19px;margin-top:2px"><span class="ic"><ui-icon n="dn"></ui-icon></span><button>Reserve...</button><button aria-label="More"><ui-icon xs n="dd"></ui-icon></button></div>
 <div class="r sp" style="height:16px;margin-bottom:1px"><span class="ic"><ui-icon n="upd"></ui-icon></span><button>Release All</button><button aria-label="More"><ui-icon xs n="dd"></ui-icon></button></div><hr class="l">
 <h4 style="padding-top:5px;height:17px"><label for="cw">Colored workspaces:</label></h4>
 <div class="r"><span class="ic"><ui-icon s n="pie"></ui-icon></span><span class="s"><select id="cw"><option>All with original Color</option></select><ui-icon xs n="chd"></ui-icon></span></div>
 <button class="my" style="margin:2px 2px 3px">My Workspace</button>
 <h3><ui-icon xs n="dd"></ui-icon>Users</h3>
 <div class="list" style="height:66px"><div><table><tr style="height:14px"><th style="width:24px"></th><th style="width:14px"><ui-icon s n="pie"></ui-icon></th><th>Name</th></tr><tr style="height:22px;border-bottom:1px solid #ccc"><td><ui-icon l n="person" style="margin:4px 0 0 3px"></ui-icon></td><td><ui-icon s n="green"></ui-icon></td><td>Martino Cucurnia</td></tr></table></div><aside><ui-icon xs n="uu"></ui-icon><ui-icon xs n="dd"></ui-icon></aside></div>
 <div class="r ics" style="height:23px"><button disabled style="width:17px;height:16px;margin-right:auto" aria-label="Remove user"><ui-icon dim n="usrx"></ui-icon></button><ui-icon n="mailb"></ui-icon><ui-icon s dim n="pie"></ui-icon><ui-icon dim n="usrb"></ui-icon></div><div style="height:1px"></div>
 <h3><ui-icon xs n="dd"></ui-icon>Messages</h3>
 <div class="r tabs" style="height:23px"><span class="on"><ui-icon n="mail"></ui-icon></span><ui-icon n="bell"></ui-icon><ui-icon n="mailp"></ui-icon></div>
 <div class="list" style="height:63px"><div><table><tr style="height:12px"><th style="padding-left:7px">From</th><th style="width:29px;white-space:nowrap">When <ui-icon xs n="dd" style="color:#888"></ui-icon></th></tr></table></div><aside><ui-icon xs n="uu"></ui-icon><ui-icon xs n="dd"></ui-icon></aside></div>
 <div class="r ics" style="height:23px"><ui-icon n="mailb"></ui-icon><ui-icon dim n="mailo"></ui-icon><ui-icon dim n="mailg"></ui-icon></div>
 <h3><ui-icon xs n="rt"></ui-icon>Tracked Changes</h3><hr class="l" style="margin-top:2px"><hr class="g">
 <div class="r" style="height:29px"><button disabled style="width:18px;height:17px" aria-label="Trace"><ui-icon n="story"></ui-icon></button><button disabled style="flex:1;height:17px"><ui-icon s n="down"></ui-icon>Below Current Story<ui-icon xs n="rt" style="margin-left:9px"></ui-icon></button></div>
 <div class="r ics" style="height:16px;opacity:.55"><ui-icon n="trk" style="margin:0 auto 0 2px"></ui-icon><ui-icon n="sqp"></ui-icon><ui-icon n="sqr"></ui-icon><ui-icon n="sqs"></ui-icon><ui-icon n="ref"></ui-icon></div><hr class="l" style="margin-top:3px">
 <h4 class="dim" style="padding-top:6px;height:18px">Reference:</h4>
 <div class="r" style="height:17px;gap:6px"><button disabled style="width:18px;height:17px" aria-label="Reference colour"><ui-icon s n="sqy"></ui-icon><ui-icon xs n="rt"></ui-icon></button><span class="sl"><input type="range" value="100" disabled aria-label="Reference"></span><button disabled style="width:8px;height:17px" aria-label="More"><ui-icon xs n="rt"></ui-icon></button></div>
 <h4 class="dim" style="padding-top:5px;height:18px">Active:</h4>
 <div class="r" style="height:22px;gap:6px;padding-right:16px;padding-bottom:5px"><button disabled style="width:18px;height:17px" aria-label="Active colour"><ui-icon s n="rgb"></ui-icon><ui-icon xs n="rt"></ui-icon></button><span class="sl"><input type="range" value="100" disabled aria-label="Active"></span></div><hr class="l">
 <div class="r" style="height:26px;justify-content:center;gap:8px;opacity:.5"><ui-icon n="sqh"></ui-icon><ui-icon n="sqo"></ui-icon><ui-icon n="sqm"></ui-icon><ui-icon n="sqx"></ui-icon></div><hr class="l"><hr class="g">
 <h4 style="padding-top:5px;height:17px">Default Elements:</h4>
 <div class="r tabs" style="height:19px"><ui-icon n="brick" style="margin-left:4px"></ui-icon><ui-icon n="doz"></ui-icon><span class="on"><ui-icon n="crane"></ui-icon></span><button style="margin-left:auto;width:18px;height:17px" aria-label="Open"><ui-icon n="fold2"></ui-icon></button></div><hr class="l" style="margin-top:2px">
 <h4 style="padding-top:6px;height:18px"><label for="rf">Renovation Filter:</label></h4>
 <div class="r"><span class="s"><select id="rf"><option>00 Show All Elements</option></select><ui-icon xs n="chd"></ui-icon></span></div>`);

define('nav-panel',`:host{display:flex;flex-direction:column;flex:1;min-width:0;border-left:1px solid #c2c2c2;background:#efefef}${HEAD}${BTN}${SEL}
 .tb{height:27px;gap:7px;padding-left:5px}.tb .on{background:#c5e2f7;width:20px;height:19px;display:flex;align-items:center;justify-content:center;margin-left:-3px}.tb i{width:1px;height:12px;background:#ccc}.path{height:14px;background:#fcfcfc;margin-left:1px}input{all:unset;font:inherit;flex:1;min-width:0;color:#6a6a6a}.q{height:15px;background:#fff;gap:3px;padding-left:3px;margin-top:2px}ul{flex:1;list-style:none;margin:1px 0 0;padding:1px 3px;background:#fff;display:block}li{display:flex;align-items:center;gap:2px;height:12px}h3{margin:0 0 3px 1px}select:disabled{background:#f1f1f1;border-color:#e2e2e2}`,
 `<hr class="g"><div class="r tb"><ui-icon n="hs"></ui-icon><i></i><ui-icon n="hsf"></ui-icon><ui-icon n="bk"></ui-icon><span class="on"><ui-icon n="book"></ui-icon></span><button style="margin-left:auto;width:22px" aria-label="Menu"><ui-icon s n="menu"></ui-icon><ui-icon xs n="rt"></ui-icon></button></div>
 <div class="r path"><ui-icon n="back" style="margin:0 5px 0 1px"></ui-icon><ui-icon n="lay"></ui-icon><span style="margin-left:9px;flex:1">1 - Layouts</span><ui-icon xs n="rt"></ui-icon></div>
 <div class="r q"><ui-icon s n="mag"></ui-icon><input aria-label="Search" value="Search '1 - Layouts'"></div>
 <ul><li><ui-icon xs n="chev"></ui-icon><ui-icon n="proj" style="margin-left:2px"></ui-icon>OPP2392_VloreBeach_Windows Generator</li></ul>
 <div class="r" style="height:22px;gap:8px;padding-left:4px;opacity:.6"><ui-icon n="newf"></ui-icon><ui-icon s n="xr"></ui-icon></div>
 <h3><ui-icon xs n="rt"></ui-icon>Properties</h3><h3 style="margin-bottom:1px"><ui-icon xs n="dd"></ui-icon>Format</h3>
 <div class="r"><span class="s"><select disabled aria-label="Format"></select><ui-icon xs dim n="chd"></ui-icon></span></div>
 <div style="height:72px"></div><hr class="l"><div class="r" style="height:19px;justify-content:flex-end;gap:4px"><button disabled style="width:89px">Publish</button><button style="width:22px" aria-label="Options"><ui-icon s n="tree"></ui-icon><ui-icon xs n="rt"></ui-icon></button></div>`);

define('axo-panel',`:host{display:flex;flex-direction:column;height:136px;background:#efefef;border-top:1px solid #c2c2c2;border-left:1px solid #c2c2c2}${HEAD}${BTN}.c{height:91px;background:#fff;border-bottom:1px solid #8f8fe6;display:flex;justify-content:center}.f{flex:1;display:flex;align-items:center;justify-content:flex-end;gap:10px}.f button{width:9px;height:9px}`,
 `<hr class="g"><div class="r" style="height:20px;padding:4px 0 2px 3px;gap:1px"><ui-icon n="cube"></ui-icon><span style="flex:1">Generic Axonometry</span><button disabled style="width:30px">Go</button></div>
 <div class="c"><svg width="80" height="91" fill="none" aria-hidden="true"><circle cx="40" cy="45" r="33" stroke="#777" stroke-dasharray="1 1"/><path fill="#fff" stroke="#333" d="M35 41h6v8h-6z"/><path fill="#8c949c" d="M41 41h4v8h-4z"/><path fill="#1e2a33" d="M34 41l8-5 6 4v9l-3 2v-9z"/><path stroke="#333" d="M52 70h6v5h-6zM52 81l3-5 3 5M51 78h8M55 70v9"/></svg></div>
 <div class="f"><button aria-label="Next"><ui-icon xs n="rt"></ui-icon></button><button aria-label="More"><ui-icon xs n="rt"></ui-icon></button></div>`);

define('status-bar',':host{display:flex;height:16px;align-items:center;border-top:1px solid #dcdcdc;border-bottom:1px solid #cfcfcf;background:#efefef;white-space:nowrap}span{flex:1;margin-left:-1px}b{font:9px/12px Lato,sans-serif;color:#222;margin:0 24px 0 12px}i{width:1px;height:13px;background:#ddd;margin:0 28px 0 5px}',
 `<span>Click an Element or Draw a Selection Area. Press and Hold Ctrl+Shift to Toggle Element/Sub-Element Selection.</span><ui-icon n="pers"></ui-icon><i></i><ui-icon n="wins"></ui-icon><b>GRAPHISOFT ID</b>`);

define('cad-app',':host{display:flex;flex-direction:column;height:calc(100vh - 17px);background:#fff;overflow:hidden}menu-bar,info-bar,status-bar,.bars,.bt{flex:none}.bars{background:#efefef;height:43px;padding-top:2px;overflow:hidden}info-bar{background:#efefef}main{display:flex;flex:1;min-height:0;background:#efefef}.mid{flex:1;min-width:0;display:flex;flex-direction:column}.mid model-view{border-bottom:1px solid #8f8fe6}.right{width:394px;display:flex;flex-direction:column}.top{display:flex;flex:1;min-height:0}.bt{background:#efefef;height:19px;padding-left:142px;border-top:1px solid #ddd;display:flex;align-items:center}',
 `<menu-bar></menu-bar><div class="bars"><tool-row style="margin-left:-1px" tools="undo- redo- | find pip syr | tri v guide* v* xy- v- grid v plane- wall sheet- v- bag- v- snap* rul- burst- grp roll v delta v | cut hammer up- corner- arc- boxr- house- | flag flagb cloud | houses | // grp- grp- poly* grp =Suspend_Groups | top- tup- tdn- bot- mir- | lock- unl- unls =Unlock_All | layers layeye =Show_All_Layers"></tool-row><layer-row></layer-row></div><info-bar></info-bar>
 <main><tool-box></tool-box><model-panel></model-panel><div class="mid"><view-tabs></view-tabs><model-view></model-view><quick-bar></quick-bar></div><div class="right"><div class="top"><team-panel></team-panel><nav-panel></nav-panel></div><axo-panel></axo-panel></div></main>
 <div class="bt"><tool-row tools="bars ztri- img- | cut boxr- sheet- hammer arc- corner- up- house- | xbox- rep- brush- hammer- | comb comb2 comb3 | al- v ds- v stk- cp- | plus- v | house- snap layers fx- rx | b3- b3- | burst- grid v corner- snap* cur2* bag- v- | tri ln- axx- ers- | par perp angl v | guide* v* br- v- | cubes v | plane- wall mesh-"></tool-row></div><status-bar></status-bar>`);
</script>
</body>
</html>
